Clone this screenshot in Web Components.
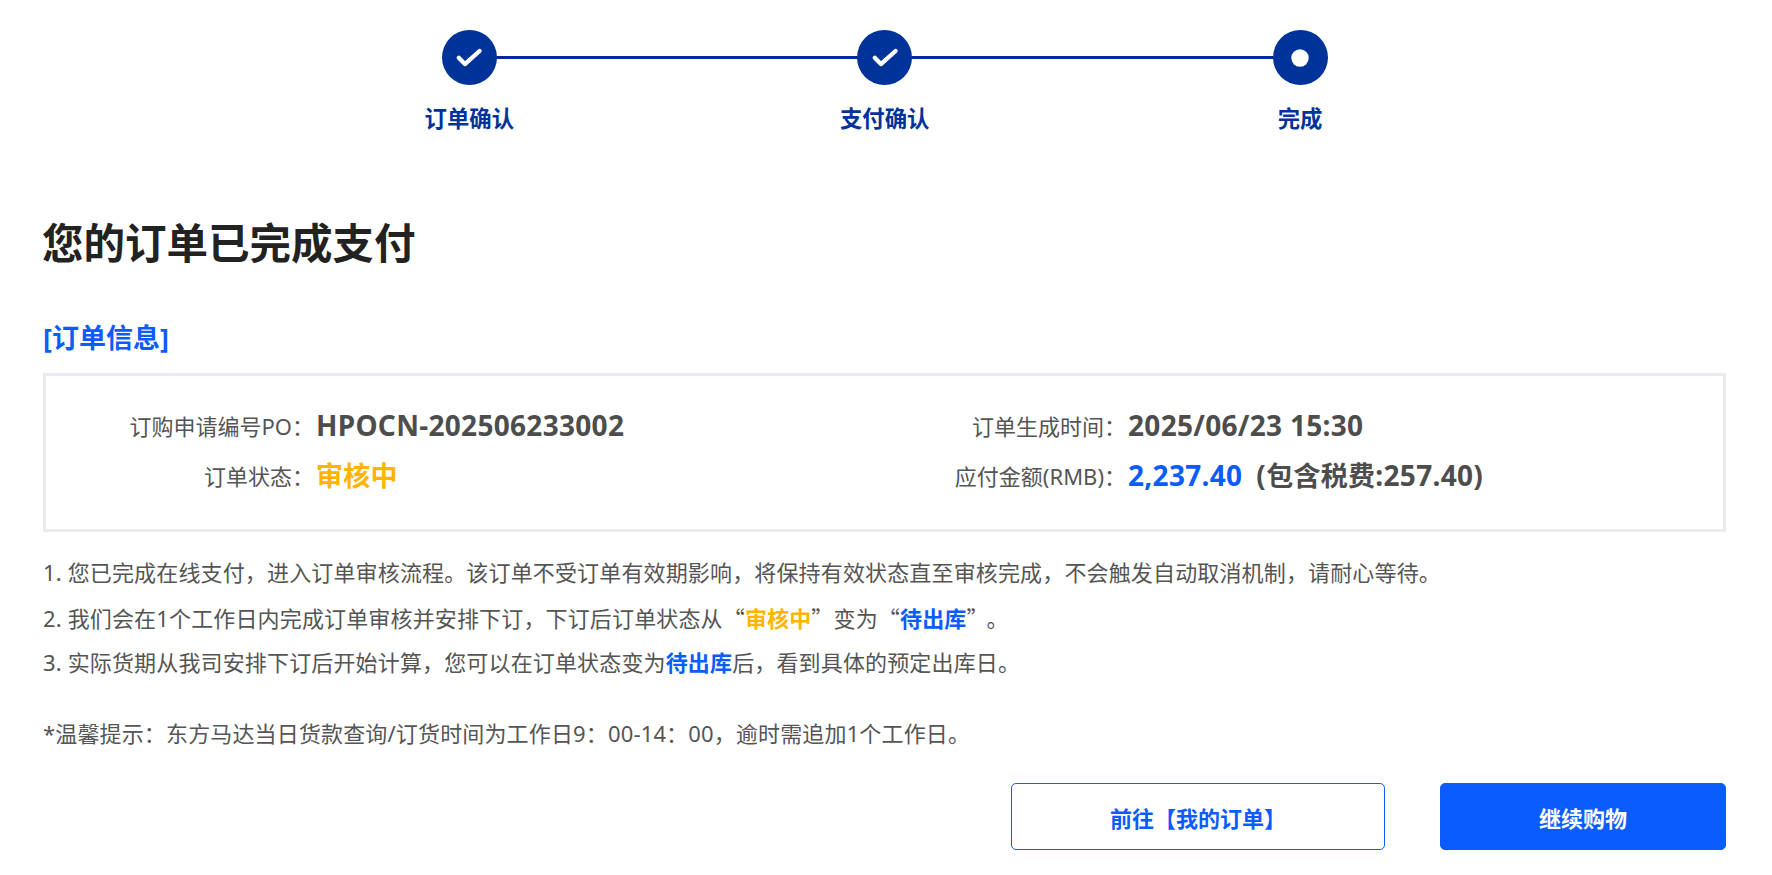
<!DOCTYPE html>
<html lang="zh-CN"><head><meta charset="utf-8"><title>订单完成</title>
<style>
html,body{margin:0;background:#fff}
body{font-family:"Noto Sans","Noto Sans CJK SC",sans-serif;color:#555;width:1772px;height:875px;overflow:hidden}
.q{font-family:"Noto Sans CJK SC",sans-serif}
.c{font-size:27px}
.e{margin-left:9px}
</style></head><body>
<order-page>
  <order-stepper>
    <order-step state="done" line>订单确认</order-step>
    <order-step state="done" line>支付确认</order-step>
    <order-step state="current">完成</order-step>
  </order-stepper>
  <h1>您的订单已完成支付</h1>
  <h2>[订单信息]</h2>
  <info-panel>
    <info-item label="订购申请编号PO：" width="268">HPOCN-202506233002</info-item>
    <info-item label="订单生成时间：" width="267">2025/06/23 15:30</info-item>
    <info-item label="订单状态：" width="268"><span class="c" style="color:#ffb400;font-weight:700">审核中</span></info-item>
    <info-item label="应付金额(RMB)：" width="267"><span style="color:#0a5cff">2,237.40</span><span style="margin-left:14px">(<span class="c">包含税费</span>:257.40)</span></info-item>
  </info-panel>
  <order-notes>
    <p>1. 您已完成在线支付，进入订单审核流程。该订单不受订单有效期影响，将保持有效状态直至审核完成，不会触发自动取消机制，请耐心等待。</p>
    <p>2. 我们会在1个工作日内完成订单审核并安排下订，下订后订单状态从<span class="q">“</span><b style="color:#ffb400">审核中</b><span class="q">”</span>变为<span class="q">“</span><b style="color:#0a5cff">待出库</b><span class="q">”</span><span class="e">。</span></p>
    <p>3. 实际货期从我司安排下订后开始计算，您可以在订单状态变为<b style="color:#0a5cff">待出库</b>后，看到具体的预定出库日。</p>
    <p class="tip">*温馨提示：东方马达当日货款查询/订货时间为工作日9：00-14：00，逾时需追加1个工作日。</p>
  </order-notes>
  <order-actions>
    <order-button kind="outline">前往【我的订单】</order-button>
    <order-button kind="solid">继续购物</order-button>
  </order-actions>
</order-page>
<script>
function def(name,css,html,init){
  customElements.define(name,class extends HTMLElement{
    constructor(){super();this.attachShadow({mode:'open'}).innerHTML='<style>'+css+'</style>'+html;}
    connectedCallback(){if(init)init.call(this,this.shadowRoot);}
  });
}
def('order-page',`
 :host{display:block;box-sizing:border-box;padding:30px 46px 0 43px;height:875px}
 ::slotted(h1){margin:81px 0 0;font-size:41.5px;line-height:56px;font-weight:700;color:#222;margin-left:-1px}
 ::slotted(h2){margin:50px 0 0;font-size:27px;line-height:34px;font-weight:700;color:#0a5cff}
`,`<slot></slot>`);
def('order-stepper',`
 :host{display:grid;grid-template-columns:repeat(3,415.4px);justify-content:center;margin-left:-45.6px;margin-right:-46px}
`,`<slot></slot>`);
def('order-step',`
 :host{display:flex;flex-direction:column;align-items:center;position:relative;font-size:22.4px;font-weight:700;color:#003399;line-height:30px}
 :host([line])::after{content:"";position:absolute;left:50%;width:100%;top:26px;height:3px;background:#002b96}
 .dot{width:55px;height:55px;border-radius:50%;background:#003399;display:flex;align-items:center;justify-content:center;position:relative;z-index:1}
 .lbl{margin-top:19px}
`,`<div class="dot"></div><div class="lbl"><slot></slot></div>`,function(r){
  const d=r.querySelector('.dot');
  d.innerHTML=this.getAttribute('state')==='done'
   ?'<svg width="28" height="22" viewBox="0 0 26 20"><path d="M3.5 9.8 9.2 15.6 22.8 3.5" fill="none" stroke="#fff" stroke-width="4" stroke-linecap="round" stroke-linejoin="round"/></svg>'
   :'<svg width="18" height="18" viewBox="0 0 18 18"><circle cx="9" cy="9" r="8.7" fill="#fff"/></svg>';
});
def('info-panel',`
 :host{display:grid;grid-template-columns:813px 1fr;grid-auto-rows:50px;align-content:center;box-sizing:border-box;height:159px;margin-top:18px;border:3px solid #e9ebef;background:#fff;padding-bottom:6px}
`,`<slot></slot>`);
def('info-item',`
 :host{display:flex;align-items:center;gap:2px;font-size:28px;font-weight:700;color:#4d4d4d;white-space:nowrap;letter-spacing:.3px}
 .k{font-size:22px;font-weight:400;color:#555;text-align:right;flex:none;letter-spacing:0}
`,`<span class="k"></span><span><slot></slot></span>`,function(r){
  const k=r.querySelector('.k');k.textContent=this.getAttribute('label');k.style.width=this.getAttribute('width')+'px';
});
def('order-notes',`
 :host{display:block;margin-top:18px;font-size:22px;line-height:44.5px;color:#555;letter-spacing:.15px}
 ::slotted(p){margin:0}
 ::slotted(.tip){margin-top:26px}
`,`<slot></slot>`);
def('order-actions',`
 :host{display:flex;justify-content:flex-end;gap:55px;margin-top:28px}
`,`<slot></slot>`);
def('order-button',`
 :host{display:flex;align-items:center;justify-content:center;box-sizing:border-box;height:67px;border-radius:5px;font-size:22px;font-weight:700;border:1px solid #0a5cff}
 :host([kind=outline]){width:374px;color:#0a5cff;background:#fff}
 :host([kind=solid]){width:286px;color:#fff;background:#0a5cff}
`,`<slot></slot>`);
</script>
</body></html>
